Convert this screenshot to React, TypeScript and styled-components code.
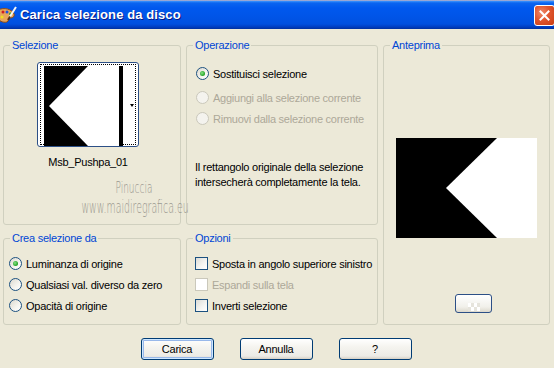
import React from "react";
import styled, { createGlobalStyle, css } from "styled-components";

const GlobalStyle = createGlobalStyle`
  html, body {
    margin: 0;
    padding: 0;
    background: #ece9d8;
  }
  body {
    font-family: "Liberation Sans", Arial, sans-serif;
    font-size: 11px;
    letter-spacing: -0.25px;
    color: #000;
  }
`;

const Window = styled.div`
  position: relative;
  width: 554px;
  height: 368px;
  overflow: hidden;
  background: #ece9d8;
  display: flex;
  flex-direction: column;
`;

const TitleBar = styled.div`
  height: 29px;
  flex: none;
  display: flex;
  align-items: center;
  justify-content: space-between;
  padding-left: 0;
  background: linear-gradient(
    #f2b8a8 0px,
    #3d95ff 1px,
    #0a64f0 3px,
    #0058ee 8px,
    #0055e8 16px,
    #0050df 24px,
    #003dc0 27px,
    #00309e 29px
  );
`;

const TitleLeft = styled.div`
  display: flex;
  align-items: center;
  gap: 3px;
`;

const Title = styled.span`
  font-family: "Liberation Sans", Arial, sans-serif;
  font-weight: bold;
  font-size: 13px;
  color: #fff;
  text-shadow: 1px 1px 0 #0a1a83;
  letter-spacing: 0.1px;
`;

const CloseButton = styled.div`
  width: 21px;
  height: 21px;
  margin-right: -1px;
  margin-top: 2px;
  box-sizing: border-box;
  border: 1px solid #fff;
  border-radius: 3px;
  background: radial-gradient(circle at 35% 35%, #f08a6a 0%, #e0552e 45%, #c93c12 100%);
  display: flex;
  align-items: center;
  justify-content: center;
`;

const Body = styled.div`
  padding: 10px 3px 0 3px;
  display: grid;
  grid-template-columns: 178px 192px 167px;
  grid-template-rows: 186px 93px;
  column-gap: 5px;
  row-gap: 7px;
`;

const Group = styled.fieldset<{ $span?: boolean }>`
  margin: 0;
  padding: 0;
  min-width: 0;
  border: 1px solid #d0d0bf;
  border-radius: 3px;
  display: flex;
  flex-direction: column;
  ${({ $span }) =>
    $span &&
    css`
      grid-column: 3;
      grid-row: 1 / span 2;
    `}
`;

const Legend = styled.legend`
  margin-left: 6px;
  padding: 0 2px;
  color: #0046d5;
  font-size: 11px;
  line-height: 13px;
`;

const SelectionContent = styled.div`
  display: flex;
  flex-direction: column;
  align-items: center;
  padding-right: 8px;
  padding-top: 10px;
`;

const ThumbButton = styled.div`
  width: 102px;
  height: 85px;
  box-sizing: border-box;
  border: 1px solid #2c4f86;
  border-radius: 3px;
  background: #fff;
  padding: 1px 2px 1px 2px;
`;

const ThumbInner = styled.div`
  height: 100%;
  box-sizing: border-box;
  border: 1px dotted #000;
  display: flex;
  padding: 1px 0 0 3px;
`;

const ThumbBar = styled.div`
  width: 4px;
  height: 80px;
  background: #000;
`;

const ThumbArrowArea = styled.div`
  flex: 1;
  display: flex;
  align-items: center;
  justify-content: flex-end;
  padding-right: 1px;
`;

const DropArrow = styled.div`
  width: 0;
  height: 0;
  border-left: 2px solid transparent;
  border-right: 2px solid transparent;
  border-top: 3px solid #000;
  margin-top: 1px;
`;

const ThumbLabel = styled.div`
  margin-top: 9px;
  line-height: 13px;
`;

const OptionList = styled.div<{ $top: number; $left: number }>`
  display: flex;
  flex-direction: column;
  margin-top: ${({ $top }) => $top}px;
  padding-left: ${({ $left }) => $left}px;
`;

const OptionRow = styled.div<{ $disabled?: boolean; $after?: number }>`
  height: 21px;
  display: flex;
  align-items: center;
  gap: 4px;
  color: ${({ $disabled }) => ($disabled ? "#aca899" : "#000")};
  margin-bottom: ${({ $after }) => $after ?? 0}px;
  white-space: nowrap;
`;

const Radio = styled.span<{ $checked?: boolean; $disabled?: boolean }>`
  width: 13px;
  height: 13px;
  flex: none;
  box-sizing: border-box;
  border-radius: 50%;
  border: 1px solid ${({ $disabled }) => ($disabled ? "#cac8bb" : "#1c5180")};
  background: ${({ $disabled }) =>
    $disabled ? "#f4f3ee" : "linear-gradient(135deg, #dcd9cf 0%, #f6f5f0 60%, #fff 100%)"};
  display: flex;
  align-items: center;
  justify-content: center;
  &::after {
    content: "";
    display: ${({ $checked }) => ($checked ? "block" : "none")};
    width: 5px;
    height: 5px;
    border-radius: 50%;
    background: radial-gradient(circle at 40% 40%, #86e286 0%, #21a121 70%);
  }
`;

const Check = styled.span<{ $disabled?: boolean }>`
  width: 13px;
  height: 13px;
  flex: none;
  box-sizing: border-box;
  border: 1px solid ${({ $disabled }) => ($disabled ? "#cac8bb" : "#1c5180")};
  background: ${({ $disabled }) =>
    $disabled ? "#fff" : "linear-gradient(135deg, #dcdcd7 0%, #f5f5f2 60%, #fff 100%)"};
`;

const Description = styled.div`
  margin-top: 31px;
  padding-left: 8px;
  line-height: 14.5px;
`;

const PreviewContent = styled.div`
  display: flex;
  flex-direction: column;
  align-items: center;
  padding-top: 86px;
`;

const PreviewSwatch = styled.div`
  margin-top: 56px;
  margin-left: 14px;
  width: 37px;
  height: 19px;
  box-sizing: border-box;
  border: 1px solid #2c4f86;
  border-radius: 3px;
  background: linear-gradient(#fff, #f1f0ea 70%, #dcd8cc);
  display: flex;
  align-items: flex-end;
  justify-content: center;
  padding-bottom: 1px;
`;

const Checker = styled.div`
  width: 12px;
  height: 8px;
  background:
    linear-gradient(90deg, #fff 50%, #e6e4dc 50%) 0 0 / 6px 4px repeat-x,
    linear-gradient(90deg, #e6e4dc 50%, #fff 50%) 0 4px / 6px 4px repeat-x;
`;

const ButtonRow = styled.div`
  margin-top: 13px;
  display: flex;
  justify-content: center;
  gap: 26px;
  padding-right: 2px;
`;

const Button = styled.button<{ $default?: boolean }>`
  width: 73px;
  height: 22px;
  padding: 0;
  font-family: "Liberation Sans", Arial, sans-serif;
  font-size: 11px;
  letter-spacing: -0.25px;
  color: #000;
  border: 1px solid #003c74;
  border-radius: 3px;
  background: linear-gradient(#fff 0%, #f5f4ef 40%, #ecebe6 85%, #d6d0c5 100%);
  box-shadow: ${({ $default }) =>
    $default ? "inset 0 0 0 1px #cee7ff, inset 0 0 0 2px #98b8ea" : "none"};
`;

const Watermark = styled.div`
  position: absolute;
  left: 60px;
  top: 179px;
  width: 150px;
  display: flex;
  flex-direction: column;
  align-items: center;
  color: #9a988f;
  font-family: "DejaVu Sans", sans-serif;
  font-weight: 300;
  letter-spacing: 0;
  pointer-events: none;
`;

const MarkLine = styled.div<{ $size: number; $scale: number; $shift: number }>`
  font-size: ${({ $size }) => $size}px;
  line-height: ${({ $size }) => $size + 2}px;
  transform: translateX(${({ $shift }) => $shift}px) scaleX(${({ $scale }) => $scale});
  white-space: nowrap;
`;

const PaletteIcon = () => (
  <svg width="17" height="18" viewBox="0 0 17 18">
    <path d="M-2 4 C4 1 12 3 14 8 C15 11 12 12 10 12 C8 12 9 15 7 16 C3 17 -2 15 -2 11 Z" fill="#e8a55a" stroke="#8a4a16" strokeWidth="1" />
    <circle cx="3" cy="6" r="1.5" fill="#d02020" />
    <circle cx="7" cy="6" r="1.5" fill="#2050e0" />
    <circle cx="10.5" cy="8" r="1.4" fill="#20a020" />
    <circle cx="2" cy="11" r="1.5" fill="#f0e020" />
    <path d="M16 1 L9 12" stroke="#f5f5f5" strokeWidth="2" />
    <path d="M10 10.5 L8 14" stroke="#603010" strokeWidth="2" />
  </svg>
);

const CloseX = () => (
  <svg width="11" height="11" viewBox="0 0 11 11">
    <path d="M1.5 1.5 L9.5 9.5 M9.5 1.5 L1.5 9.5" stroke="#fff" strokeWidth="2" strokeLinecap="square" />
  </svg>
);

const ThumbImage = () => (
  <svg width="75" height="80" viewBox="0 0 75 80">
    <rect width="75" height="80" fill="#000" />
    <polygon points="44,0 75,0 75,80 44,80 5,40" fill="#fff" />
  </svg>
);

const PreviewImage = () => (
  <svg width="141" height="100" viewBox="0 0 141 100">
    <rect width="141" height="100" fill="#000" />
    <polygon points="101,0 141,0 141,100 101,100 50,50" fill="#fff" />
  </svg>
);

const operations = [
  { label: "Sostituisci selezione", checked: true },
  { label: "Aggiungi alla selezione corrente", disabled: true },
  { label: "Rimuovi dalla selezione corrente", disabled: true },
];

const sources = [
  { label: "Luminanza di origine", checked: true },
  { label: "Qualsiasi val. diverso da zero" },
  { label: "Opacità di origine" },
];

const options = [
  { label: "Sposta in angolo superiore sinistro" },
  { label: "Espandi sulla tela", disabled: true },
  { label: "Inverti selezione" },
];

const App: React.FC = () => {
  return (
    <>
      <GlobalStyle />
      <Window>
        <TitleBar>
          <TitleLeft>
            <PaletteIcon />
            <Title>Carica selezione da disco</Title>
          </TitleLeft>
          <CloseButton>
            <CloseX />
          </CloseButton>
        </TitleBar>

        <Body>
          <Group>
            <Legend>Selezione</Legend>
            <SelectionContent>
              <ThumbButton>
                <ThumbInner>
                  <ThumbImage />
                  <ThumbBar />
                  <ThumbArrowArea>
                    <DropArrow />
                  </ThumbArrowArea>
                </ThumbInner>
              </ThumbButton>
              <ThumbLabel>Msb_Pushpa_01</ThumbLabel>
            </SelectionContent>
          </Group>

          <Group>
            <Legend>Operazione</Legend>
            <OptionList $top={11} $left={9}>
              {operations.map(({ label, checked, disabled }, i) => (
                <OptionRow key={label} $disabled={disabled} $after={i === 0 ? 3 : 0}>
                  <Radio $checked={checked} $disabled={disabled} />
                  {label}
                </OptionRow>
              ))}
            </OptionList>
            <Description>
              Il rettangolo originale della selezione
              <br />
              intersecherà completamente la tela.
            </Description>
          </Group>

          <Group $span>
            <Legend>Anteprima</Legend>
            <PreviewContent>
              <PreviewImage />
              <PreviewSwatch>
                <Checker />
              </PreviewSwatch>
            </PreviewContent>
          </Group>

          <Group>
            <Legend>Crea selezione da</Legend>
            <OptionList $top={8} $left={5}>
              {sources.map(({ label, checked }) => (
                <OptionRow key={label}>
                  <Radio $checked={checked} />
                  {label}
                </OptionRow>
              ))}
            </OptionList>
          </Group>

          <Group>
            <Legend>Opzioni</Legend>
            <OptionList $top={8} $left={8}>
              {options.map(({ label, disabled }) => (
                <OptionRow key={label} $disabled={disabled}>
                  <Check $disabled={disabled} />
                  {label}
                </OptionRow>
              ))}
            </OptionList>
          </Group>
        </Body>

        <ButtonRow>
          <Button $default>Carica</Button>
          <Button>Annulla</Button>
          <Button>?</Button>
        </ButtonRow>

        <Watermark>
          <MarkLine $size={16} $scale={0.56} $shift={-1}>Pinuccia</MarkLine>
          <MarkLine $size={18} $scale={0.52} $shift={0}>www.maidiregrafica.eu</MarkLine>
        </Watermark>
      </Window>
    </>
  );
};

export default App;
